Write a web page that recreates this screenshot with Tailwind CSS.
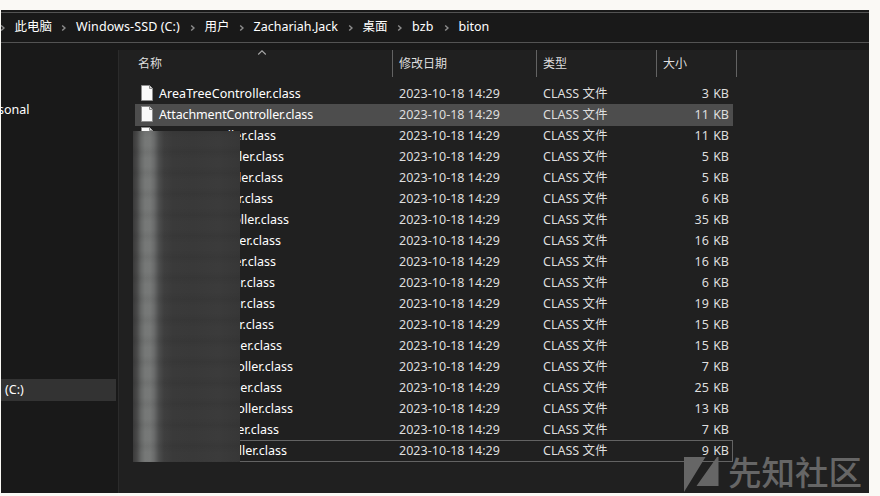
<!DOCTYPE html>
<html lang="zh-CN">
<head>
<meta charset="utf-8">
<title>biton</title>
<script src="https://cdn.jsdelivr.net/npm/@tailwindcss/browser@4"></script>
</head>
<body class="w-[880px] h-[496px] overflow-hidden bg-[#faf9f5] pt-[10px] pl-px font-['Noto_Sans','Noto_Sans_CJK_SC',sans-serif] text-[12.5px] text-white">
<div class="relative flex flex-col w-[868px] h-[483px] bg-[#191919]">
  <nav class="relative mt-[2px] h-[31px] shrink-0 border-y border-[#535353] text-[12.5px] leading-[29px] whitespace-nowrap overflow-hidden" id="crumbs"></nav>
  <div class="flex flex-1 min-h-0 pt-[7px]">
    <aside class="w-[117px] shrink-0 flex flex-col pr-[2px] overflow-hidden">
      <div class="mt-[49px] h-[22px] leading-[22px] -ml-[3px]">sonal</div>
      <div class="mt-[258px] h-[22px] leading-[22px] pl-[4px] bg-[#333333]">(C:)</div>
    </aside>
    <main class="relative flex-1 border-l border-[#2b2b2b] bg-[#202020]">
      <header class="flex h-[27px] leading-[28px] text-[12px] text-[#dedede]">
        <div class="relative w-[274px] pl-[19px] border-r border-[#636363]">名称
          <svg class="absolute left-[138px] top-0" width="10" height="6" viewBox="0 0 10 6" fill="none" stroke="#a8a8a8" stroke-width="1.1"><path d="M1.2 4.5 5 .8 8.8 4.5"/></svg>
        </div>
        <div class="w-[144px] pl-[6px] border-r border-[#636363]">修改日期</div>
        <div class="w-[120px] pl-[6px] border-r border-[#636363]">类型</div>
        <div class="w-[80px] pl-[6px] border-r border-[#636363]">大小</div>
      </header>
      <div class="mt-[6px] ml-[16px] w-[598px]" id="rows"></div>
      <div class="absolute left-[14px] top-[81px] w-[107px] h-[331px] bg-[linear-gradient(90deg,#3a3a3a_0,#4a4a4a_4px,#666867_8px,#767877_12px,#777978_17px,#6a6b6b_21px,#4c4d4d_26px,#3f3f3f_31px,#3a3a3a_40px,#393939_60px,#3b3b3b_85px,#373737_100%)]">
        <div class="size-full bg-[repeating-linear-gradient(180deg,#0000000d_0,#00000000_7px,#00000000_14px,#0000000d_21px)]"></div>
      </div>
    </main>
  </div>
  <div class="absolute left-[683px] top-[440px] flex items-start text-[#666666]">
    <svg class="shrink-0 mt-[6px]" width="36" height="37" viewBox="0 0 36 37" fill="currentColor"><path d="M0 1H21.5L0 36ZM34.5 1V30H12.5L33 1Z"/></svg>
    <span class="ml-[8px] -mt-[4px] text-[33.5px] leading-[50px] font-medium whitespace-nowrap font-['Noto_Sans_CJK_SC',sans-serif]">先知社区</span>
  </div>
</div>
<script>
  // Breadcrumb: [label, label x, chevron x before it, letter spacing]
  const crumbs = [['此电脑', 14, -1, 0], ['Windows-SSD (C:)', 75.5, 60, 0.1], ['用户', 204, 189, 0], ['Zachariah.Jack', 253, 238, 0], ['桌面', 362, 347, 0], ['bzb', 411.5, 396, 0.1], ['biton', 458, 443, 0]];
  document.getElementById('crumbs').innerHTML = crumbs.map(([t, x, c, s]) => `
    <svg class="absolute top-[11px]" style="left:${c}px" width="6" height="8" viewBox="0 0 6 8" fill="none" stroke="#8c8c8c" stroke-width="1.4"><path d="M1.2 1.4 4 4 1.2 6.6"/></svg>
    <span class="absolute -top-px" style="left:${x - 0.5}px;letter-spacing:${s}px">${t}</span>`).join('');
  // [name, size, right edge of the name within the row (0 = left aligned), letter spacing]
  const files = [['AreaTreeController', 3, 0, 0.05], ['AttachmentController', 11, 0, -0.12], ['Controller', 11, 141], ['Controller', 5, 149], ['Controller', 5, 148], ['Controller', 6, 138], ['Controller', 35, 154], ['Controller', 16, 146], ['Controller', 16, 141], ['Controller', 6, 140], ['Controller', 19, 140], ['Controller', 15, 139], ['Controller', 15, 147], ['Controller', 7, 158], ['Controller', 25, 147], ['Controller', 13, 158], ['Controller', 7, 144], ['Controller', 9, 152]];
  document.getElementById('rows').innerHTML = files.map(([n, s, r, ls]) => [n, s, r, ls || 0]).map(([n, s, r, ls], i) => `
    <div class="flex h-[21px] leading-[21px] whitespace-nowrap ${i === 1 ? 'bg-[#4d4d4d] shadow-[0_1px_0_#4d4d4d]' : ''} ${i === 17 ? 'outline outline-[#636363] -outline-offset-1 h-[22px]' : ''}">
      <svg class="shrink-0 ml-[6px] mt-[2px]" width="12" height="16" viewBox="0 0 12 16"><path d="M.5.5H8.5L11.5 3.5V15.5H.5Z" fill="#fafafa" stroke="#8d8d8d"/><path d="M8.5 .5V3.5H11.5" fill="#ddd" stroke="#8d8d8d"/></svg>
      <div class="w-[246px] shrink-0 pl-[6px]"><div class="${r ? 'text-right' : ''}" style="letter-spacing:${ls}px;${r ? `width:${r - 24}px;direction:rtl` : ''}"><bdi dir="ltr">${n}.class</bdi></div></div>
      <div class="w-[144px] shrink-0 text-[#dedede] tracking-[0.03px]">2023-10-18 14:29</div>
      <div class="w-[120px] shrink-0 text-[#dedede]">CLASS 文件</div>
      <div class="w-[66px] shrink-0 text-right text-[#dedede] [word-spacing:1px]">${s} KB</div>
    </div>`).join('');
</script>
</body>
</html>
